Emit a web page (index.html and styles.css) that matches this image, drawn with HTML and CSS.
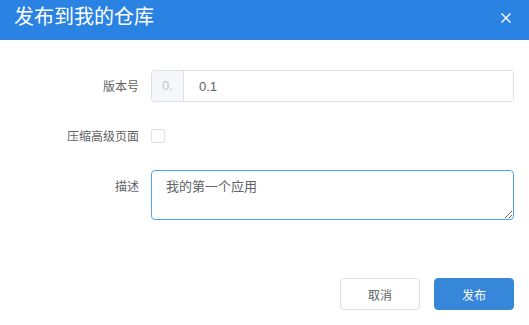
FILE: index.html
```html
<!DOCTYPE html>
<html lang="zh-CN">
<head>
    <meta charset="UTF-8">
    <meta name="viewport" content="width=device-width, initial-scale=1.0">
    <title>发布到我的仓库</title>
    <link rel="stylesheet" href="styles.css">
</head>
<body>
    <div class="dialog">
        <header class="dialog-header">
            <span class="dialog-title">发布到我的仓库</span>
            <button class="dialog-close" type="button" aria-label="关闭">
                <svg width="10" height="10" viewBox="0 0 10 10">
                    <path d="M0.5 0.5 L9.5 9.5 M9.5 0.5 L0.5 9.5" stroke="#fff" stroke-width="1.4" fill="none"/>
                </svg>
            </button>
        </header>
        <main class="dialog-body">
            <div class="form-item">
                <label class="form-label">版本号</label>
                <div class="input-group">
                    <span class="input-prepend">0.</span>
                    <input class="input" type="text" value="0.1">
                </div>
            </div>
            <div class="form-item">
                <label class="form-label">压缩高级页面</label>
                <div class="check-wrap">
                    <span class="checkbox"></span>
                </div>
            </div>
            <div class="form-item">
                <label class="form-label">描述</label>
                <textarea class="textarea">我的第一个应用</textarea>
            </div>
        </main>
        <footer class="dialog-footer">
            <button class="btn" type="button">取消</button>
            <button class="btn btn-primary" type="button">发布</button>
        </footer>
    </div>
</body>
</html>
```

FILE: styles.css
```css
body {
    font-family: "Liberation Sans", "Noto Sans CJK SC", sans-serif;
    margin: 0;
    padding: 0;
    background-color: #fff;
    color: #606266;
}
.dialog-header {
    background-color: #2a82e2;
    height: 40px;
    box-sizing: border-box;
    padding: 6px 18px 0 14px;
    display: flex;
    justify-content: space-between;
    align-items: flex-start;
}
.dialog-title {
    color: #fff;
    font-size: 20px;
    line-height: 20px;
    font-family: "Noto Sans CJK SC", sans-serif;
}
.dialog-close {
    background: none;
    border: 0;
    padding: 0;
    margin-top: 7px;
    width: 10px;
    height: 10px;
    display: flex;
}
.dialog-body {
    padding: 30px 15px 0;
}
.form-item {
    display: flex;
    margin-bottom: 18px;
}
.form-label {
    width: 124px;
    padding-right: 12px;
    text-align: right;
    font-size: 12px;
    line-height: 32px;
    font-family: "Noto Sans CJK SC", sans-serif;
    color: #606266;
}
.input-group {
    flex: 1;
    display: flex;
    height: 32px;
    box-sizing: border-box;
    border: 1px solid #dcdfe6;
    border-radius: 4px;
    overflow: hidden;
}
.input-prepend {
    width: 31px;
    background-color: #f5f7fa;
    border-right: 1px solid #dcdfe6;
    color: #c0c4cc;
    font-size: 13px;
    line-height: 30px;
    text-align: center;
}
.input {
    flex: 1;
    border: 0;
    outline: none;
    padding: 0 15px;
    font-family: "Liberation Sans", "Noto Sans CJK SC", sans-serif;
    font-size: 13px;
    color: #606266;
}
.check-wrap {
    height: 32px;
    display: flex;
    align-items: center;
}
.checkbox {
    width: 14px;
    height: 14px;
    box-sizing: border-box;
    border: 1px solid #dcdfe6;
    border-radius: 2px;
}
.textarea {
    flex: 1;
    height: 50px;
    box-sizing: border-box;
    border: 1px solid #4ea5ef;
    border-radius: 4px;
    padding: 5px 14px;
    font-family: "Noto Sans CJK SC", sans-serif;
    font-size: 13px;
    line-height: 19px;
    color: #606266;
    outline: none;
    margin: 0;
}
.dialog-footer {
    display: flex;
    justify-content: flex-end;
    gap: 14px;
    padding: 40px 15px 0;
}
.btn {
    width: 80px;
    height: 32px;
    border: 1px solid #dcdfe6;
    border-radius: 4px;
    background-color: #fff;
    color: #606266;
    font-family: "Noto Sans CJK SC", sans-serif;
    font-size: 12px;
    padding: 0;
}
.btn-primary {
    background-color: #3686d9;
    border-color: #3686d9;
    color: #fff;
}
```
